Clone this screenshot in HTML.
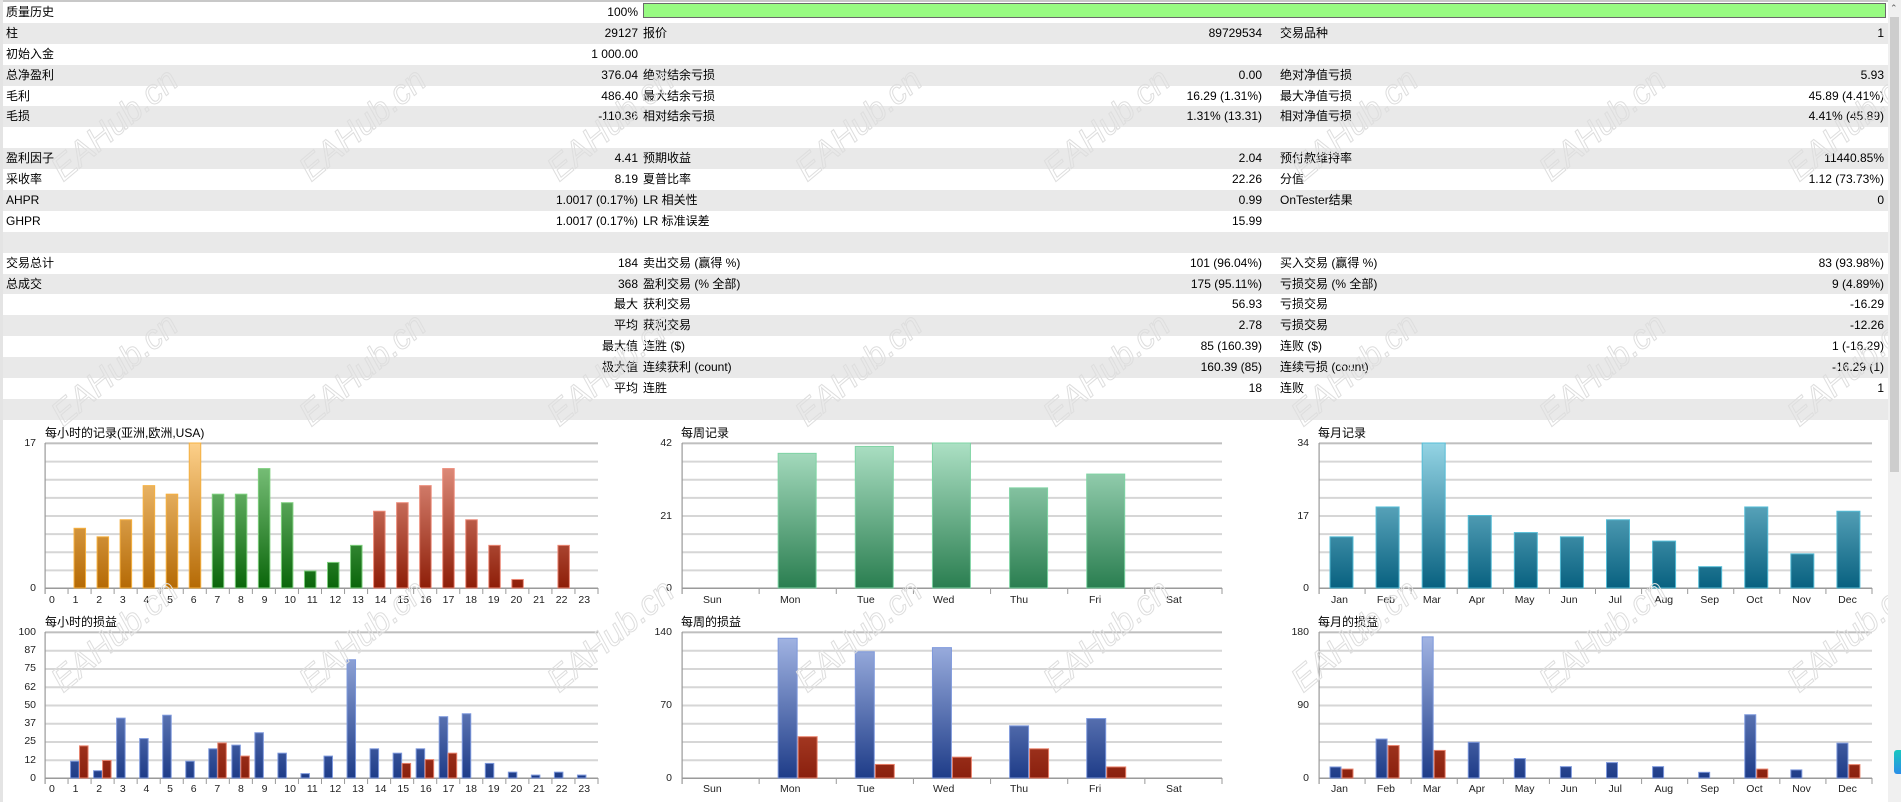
<!DOCTYPE html>
<html><head><meta charset="utf-8">
<style>
*{margin:0;padding:0;box-sizing:border-box}
body{width:1901px;height:802px;overflow:hidden;background:#fff;position:relative;font-family:"Liberation Sans","Noto Sans CJK SC",sans-serif;font-size:12px;color:#000}
.topline{position:absolute;left:0;top:0;width:1888px;height:2px;background:#c8c8c8}
.leftline{position:absolute;left:0;top:0;width:3px;height:802px;background:#e4e4e4}
.rows{position:absolute;left:3px;top:2px;width:1885px}
.r{position:relative;height:20.9px;line-height:20.9px;white-space:nowrap}
.r.g{background:#e9e9e9}
.r span{position:absolute;top:0}
.l1{left:3px}.v1{right:1250px;text-align:right}
.l2{left:640px}.v2{right:626px;text-align:right}
.l3{left:1277px}.v3{right:4px;text-align:right}
.bar{position:absolute;left:643px;top:3px;width:1243px;height:15px;background:#98fb82;border:1px solid #6a6a6a}
.sb{position:absolute;left:1888px;top:0;width:13px;height:802px;background:#f0f0f0}
.thumb{position:absolute;left:1890px;top:17px;width:9px;height:455px;background:#cdcdcd}
.arr{position:absolute;left:1890px;top:3px;font-size:9px;color:#606060}
.widget{position:absolute;left:1894px;top:750px;width:7px;height:24px;border-radius:3px 0 0 3px;background:linear-gradient(#19c7c0,#2a8ee8)}
.t{position:absolute;font-size:12px;white-space:nowrap}
.xl{position:absolute;display:flex;font-size:10.5px;color:#222}
.xl span{flex:1 1 0;white-space:nowrap}
.yl{position:absolute;font-size:10.5px;color:#222;text-align:right;width:30px}
.wm{position:absolute;font:italic 34px "Liberation Sans",sans-serif;color:transparent;-webkit-text-stroke:1px #dedede;transform:translate(-50%,-50%) rotate(-40deg);white-space:nowrap;pointer-events:none}
svg{position:absolute;left:0;top:0}
</style></head><body>
<div class="topline"></div>
<div class="rows">
<div class="r"><span class="l1">质量历史</span><span class="v1">100%</span></div>
<div class="r g"><span class="l1">柱</span><span class="v1">29127</span><span class="l2">报价</span><span class="v2">89729534</span><span class="l3">交易品种</span><span class="v3">1</span></div>
<div class="r"><span class="l1">初始入金</span><span class="v1">1 000.00</span></div>
<div class="r g"><span class="l1">总净盈利</span><span class="v1">376.04</span><span class="l2">绝对结余亏损</span><span class="v2">0.00</span><span class="l3">绝对净值亏损</span><span class="v3">5.93</span></div>
<div class="r"><span class="l1">毛利</span><span class="v1">486.40</span><span class="l2">最大结余亏损</span><span class="v2">16.29 (1.31%)</span><span class="l3">最大净值亏损</span><span class="v3">45.89 (4.41%)</span></div>
<div class="r g"><span class="l1">毛损</span><span class="v1">-110.36</span><span class="l2">相对结余亏损</span><span class="v2">1.31% (13.31)</span><span class="l3">相对净值亏损</span><span class="v3">4.41% (45.89)</span></div>
<div class="r"></div>
<div class="r g"><span class="l1">盈利因子</span><span class="v1">4.41</span><span class="l2">预期收益</span><span class="v2">2.04</span><span class="l3">预付款维持率</span><span class="v3">11440.85%</span></div>
<div class="r"><span class="l1">采收率</span><span class="v1">8.19</span><span class="l2">夏普比率</span><span class="v2">22.26</span><span class="l3">分值</span><span class="v3">1.12 (73.73%)</span></div>
<div class="r g"><span class="l1">AHPR</span><span class="v1">1.0017 (0.17%)</span><span class="l2">LR 相关性</span><span class="v2">0.99</span><span class="l3">OnTester结果</span><span class="v3">0</span></div>
<div class="r"><span class="l1">GHPR</span><span class="v1">1.0017 (0.17%)</span><span class="l2">LR 标准误差</span><span class="v2">15.99</span></div>
<div class="r g"></div>
<div class="r"><span class="l1">交易总计</span><span class="v1">184</span><span class="l2">卖出交易 (赢得 %)</span><span class="v2">101 (96.04%)</span><span class="l3">买入交易 (赢得 %)</span><span class="v3">83 (93.98%)</span></div>
<div class="r g"><span class="l1">总成交</span><span class="v1">368</span><span class="l2">盈利交易 (% 全部)</span><span class="v2">175 (95.11%)</span><span class="l3">亏损交易 (% 全部)</span><span class="v3">9 (4.89%)</span></div>
<div class="r"><span class="v1">最大</span><span class="l2">获利交易</span><span class="v2">56.93</span><span class="l3">亏损交易</span><span class="v3">-16.29</span></div>
<div class="r g"><span class="v1">平均</span><span class="l2">获利交易</span><span class="v2">2.78</span><span class="l3">亏损交易</span><span class="v3">-12.26</span></div>
<div class="r"><span class="v1">最大值</span><span class="l2">连胜 ($)</span><span class="v2">85 (160.39)</span><span class="l3">连败 ($)</span><span class="v3">1 (-16.29)</span></div>
<div class="r g"><span class="v1">极大值</span><span class="l2">连续获利 (count)</span><span class="v2">160.39 (85)</span><span class="l3">连续亏损 (count)</span><span class="v3">-16.29 (1)</span></div>
<div class="r"><span class="v1">平均</span><span class="l2">连胜</span><span class="v2">18</span><span class="l3">连败</span><span class="v3">1</span></div>
<div class="r g"></div>
</div>
<div class="leftline"></div>
<div class="bar"></div>

<svg id="c" width="1901" height="802" xmlns="http://www.w3.org/2000/svg">
<defs>
<linearGradient id="go" gradientUnits="userSpaceOnUse" x1="0" y1="443" x2="0" y2="588"><stop offset="0" stop-color="#fdd08a"/><stop offset="1" stop-color="#b56a05"/></linearGradient>
<linearGradient id="gg" gradientUnits="userSpaceOnUse" x1="0" y1="443" x2="0" y2="588"><stop offset="0" stop-color="#8ccf8c"/><stop offset="1" stop-color="#0a660a"/></linearGradient>
<linearGradient id="gr" gradientUnits="userSpaceOnUse" x1="0" y1="443" x2="0" y2="588"><stop offset="0" stop-color="#eca090"/><stop offset="1" stop-color="#8e1e08"/></linearGradient>
<linearGradient id="gw" gradientUnits="userSpaceOnUse" x1="0" y1="443" x2="0" y2="588"><stop offset="0" stop-color="#ace0c4"/><stop offset="1" stop-color="#2a7e50"/></linearGradient>
<linearGradient id="gt" gradientUnits="userSpaceOnUse" x1="0" y1="443" x2="0" y2="588"><stop offset="0" stop-color="#94d4e4"/><stop offset="1" stop-color="#086180"/></linearGradient>
<linearGradient id="gb" gradientUnits="userSpaceOnUse" x1="0" y1="632" x2="0" y2="778"><stop offset="0" stop-color="#a6b8e6"/><stop offset="1" stop-color="#1e3c88"/></linearGradient>
<linearGradient id="gd" gradientUnits="userSpaceOnUse" x1="0" y1="632" x2="0" y2="778"><stop offset="0" stop-color="#e07050"/><stop offset="1" stop-color="#8a200e"/></linearGradient>
</defs>
</svg>

<div class="t" style="left:45px;top:424px">每小时的记录(亚洲,欧洲,USA)</div>
<div class="t" style="left:45px;top:613px">每小时的损益</div>
<div class="t" style="left:681px;top:424px">每周记录</div>
<div class="t" style="left:681px;top:613px">每周的损益</div>
<div class="t" style="left:1318px;top:424px">每月记录</div>
<div class="t" style="left:1318px;top:613px">每月的损益</div>

<div class="yl" style="left:6px;top:437px">17</div>
<div class="yl" style="left:6px;top:582px">0</div>
<div class="yl" style="left:6px;top:626px">100</div>
<div class="yl" style="left:6px;top:644px">87</div>
<div class="yl" style="left:6px;top:662px">75</div>
<div class="yl" style="left:6px;top:681px">62</div>
<div class="yl" style="left:6px;top:699px">50</div>
<div class="yl" style="left:6px;top:717px">37</div>
<div class="yl" style="left:6px;top:735px">25</div>
<div class="yl" style="left:6px;top:754px">12</div>
<div class="yl" style="left:6px;top:772px">0</div>
<div class="yl" style="left:642px;top:437px">42</div>
<div class="yl" style="left:642px;top:510px">21</div>
<div class="yl" style="left:642px;top:582px">0</div>
<div class="yl" style="left:642px;top:626px">140</div>
<div class="yl" style="left:642px;top:699px">70</div>
<div class="yl" style="left:642px;top:772px">0</div>
<div class="yl" style="left:1279px;top:437px">34</div>
<div class="yl" style="left:1279px;top:510px">17</div>
<div class="yl" style="left:1279px;top:582px">0</div>
<div class="yl" style="left:1279px;top:626px">180</div>
<div class="yl" style="left:1279px;top:699px">90</div>
<div class="yl" style="left:1279px;top:772px">0</div>

<div class="xl" style="left:45px;top:594px;width:553px"><span style="padding-left:4px">0</span><span style="padding-left:4px">1</span><span style="padding-left:4px">2</span><span style="padding-left:4px">3</span><span style="padding-left:4px">4</span><span style="padding-left:4px">5</span><span style="padding-left:4px">6</span><span style="padding-left:4px">7</span><span style="padding-left:4px">8</span><span style="padding-left:4px">9</span><span style="padding-left:3px">10</span><span style="padding-left:3px">11</span><span style="padding-left:3px">12</span><span style="padding-left:3px">13</span><span style="padding-left:3px">14</span><span style="padding-left:3px">15</span><span style="padding-left:3px">16</span><span style="padding-left:3px">17</span><span style="padding-left:3px">18</span><span style="padding-left:3px">19</span><span style="padding-left:3px">20</span><span style="padding-left:3px">21</span><span style="padding-left:3px">22</span><span style="padding-left:3px">23</span></div>
<div class="xl" style="left:45px;top:783px;width:553px"><span style="padding-left:4px">0</span><span style="padding-left:4px">1</span><span style="padding-left:4px">2</span><span style="padding-left:4px">3</span><span style="padding-left:4px">4</span><span style="padding-left:4px">5</span><span style="padding-left:4px">6</span><span style="padding-left:4px">7</span><span style="padding-left:4px">8</span><span style="padding-left:4px">9</span><span style="padding-left:3px">10</span><span style="padding-left:3px">11</span><span style="padding-left:3px">12</span><span style="padding-left:3px">13</span><span style="padding-left:3px">14</span><span style="padding-left:3px">15</span><span style="padding-left:3px">16</span><span style="padding-left:3px">17</span><span style="padding-left:3px">18</span><span style="padding-left:3px">19</span><span style="padding-left:3px">20</span><span style="padding-left:3px">21</span><span style="padding-left:3px">22</span><span style="padding-left:3px">23</span></div>
<div class="xl" style="left:682px;top:594px;width:540px"><span style="padding-left:21px">Sun</span><span style="padding-left:21px">Mon</span><span style="padding-left:21px">Tue</span><span style="padding-left:20px">Wed</span><span style="padding-left:21px">Thu</span><span style="padding-left:23px">Fri</span><span style="padding-left:21px">Sat</span></div>
<div class="xl" style="left:682px;top:783px;width:540px"><span style="padding-left:21px">Sun</span><span style="padding-left:21px">Mon</span><span style="padding-left:21px">Tue</span><span style="padding-left:20px">Wed</span><span style="padding-left:21px">Thu</span><span style="padding-left:23px">Fri</span><span style="padding-left:21px">Sat</span></div>
<div class="xl" style="left:1319px;top:594px;width:553px"><span style="padding-left:12px">Jan</span><span style="padding-left:12px">Feb</span><span style="padding-left:12px">Mar</span><span style="padding-left:12px">Apr</span><span style="padding-left:12px">May</span><span style="padding-left:12px">Jun</span><span style="padding-left:14px">Jul</span><span style="padding-left:12px">Aug</span><span style="padding-left:12px">Sep</span><span style="padding-left:12px">Oct</span><span style="padding-left:12px">Nov</span><span style="padding-left:12px">Dec</span></div>
<div class="xl" style="left:1319px;top:783px;width:553px"><span style="padding-left:12px">Jan</span><span style="padding-left:12px">Feb</span><span style="padding-left:12px">Mar</span><span style="padding-left:12px">Apr</span><span style="padding-left:12px">May</span><span style="padding-left:12px">Jun</span><span style="padding-left:14px">Jul</span><span style="padding-left:12px">Aug</span><span style="padding-left:12px">Sep</span><span style="padding-left:12px">Oct</span><span style="padding-left:12px">Nov</span><span style="padding-left:12px">Dec</span></div>

<div class="wm" style="left:115px;top:125px">EAHub.cn</div><div class="wm" style="left:363px;top:125px">EAHub.cn</div><div class="wm" style="left:611px;top:125px">EAHub.cn</div><div class="wm" style="left:859px;top:125px">EAHub.cn</div><div class="wm" style="left:1107px;top:125px">EAHub.cn</div><div class="wm" style="left:1355px;top:125px">EAHub.cn</div><div class="wm" style="left:1603px;top:125px">EAHub.cn</div><div class="wm" style="left:1851px;top:125px">EAHub.cn</div>
<div class="wm" style="left:115px;top:370px">EAHub.cn</div><div class="wm" style="left:363px;top:370px">EAHub.cn</div><div class="wm" style="left:611px;top:370px">EAHub.cn</div><div class="wm" style="left:859px;top:370px">EAHub.cn</div><div class="wm" style="left:1107px;top:370px">EAHub.cn</div><div class="wm" style="left:1355px;top:370px">EAHub.cn</div><div class="wm" style="left:1603px;top:370px">EAHub.cn</div><div class="wm" style="left:1851px;top:370px">EAHub.cn</div>
<div class="wm" style="left:115px;top:636px">EAHub.cn</div><div class="wm" style="left:363px;top:636px">EAHub.cn</div><div class="wm" style="left:611px;top:636px">EAHub.cn</div><div class="wm" style="left:859px;top:636px">EAHub.cn</div><div class="wm" style="left:1107px;top:636px">EAHub.cn</div><div class="wm" style="left:1355px;top:636px">EAHub.cn</div><div class="wm" style="left:1603px;top:636px">EAHub.cn</div><div class="wm" style="left:1851px;top:636px">EAHub.cn</div>

<div class="sb"></div><div class="thumb"></div><div class="arr">&#8963;</div>
<div class="widget"></div>

<script>
(function(){
var S=document.getElementById('c'),NS='http://www.w3.org/2000/svg';
function el(n,a){var e=document.createElementNS(NS,n);for(var k in a)e.setAttribute(k,a[k]);S.appendChild(e);return e;}
function grid(x0,x1,top,base,n){
  for(var i=0;i<8;i++){var y=top+(base-top)*i/8;
    el('rect',{x:x0,y:y-0.5,width:x1-x0,height:2,fill:'#d6d6d6'});}
  el('rect',{x:x0,y:top-0.5,width:x1-x0,height:1,fill:'#a8a8a8'});
  el('rect',{x:x0,y:base-0.5,width:x1-x0,height:1.5,fill:'#9a9a9a'});
  el('rect',{x:x0-0.5,y:top,width:1.2,height:base-top+6,fill:'#9a9a9a'});
  var s=(x1-x0)/n;
  for(var j=1;j<=n;j++){el('rect',{x:x0+s*j-0.5,y:base,width:1,height:6,fill:'#9a9a9a'});}
}
function bars(x0,x1,top,base,max,vals,off,w,fill,stroke){
  var n=vals.length,s=(x1-x0)/n;
  for(var i=0;i<n;i++){var v=vals[i];if(!v)continue;
    var h=(base-top)*v/max,f=typeof fill=='function'?fill(i):fill,st=typeof stroke=='function'?stroke(i):stroke;
    el('rect',{x:x0+s*i+off,y:base-h,width:w,height:h,fill:f,stroke:st,'stroke-width':1});}
}
grid(45,598,443,588,24);
bars(45,598,443,588,17,[0,7,6,8,12,11,17,11,11,14,10,2,3,5,9,10,12,14,8,5,1,0,5,0],6,11.5,
 function(i){return i<7?'url(#go)':i<14?'url(#gg)':'url(#gr)';},
 function(i){return i<7?'#f5b040':i<14?'#7fcf7f':'#ec8a78';});
grid(45,598,632,778,24);
bars(45,598,632,778,100,[0,11.5,5,41,27,43,11.5,20,22.5,31,17,3,15,81,20,17,20,42,44,10,4,2,4,2],2.5,8.5,'url(#gb)','#7d98dc');
bars(45,598,632,778,100,[0,22,12,0,0,0,0,24,15,0,0,0,0,0,0,10,12.6,17,0,0,0,0,0,0],11.5,8.5,'url(#gd)','#e8806a');
grid(682,1222,443,588,7);
bars(682,1222,443,588,42,[0,39,41,42,29,33,0],19,38,'url(#gw)','#7fd4a4');
grid(682,1222,632,778,7);
bars(682,1222,632,778,140,[0,134,121,125,50,57,0],19,19,'url(#gb)','#7d98dc');
bars(682,1222,632,778,140,[0,39.6,13,20,28,10.6,0],39,19,'url(#gd)','#e8806a');
grid(1319,1872,443,588,12);
bars(1319,1872,443,588,34,[12,19,34,17,13,12,16,11,5,19,8,18],11,23,'url(#gt)','#55bcd6');
grid(1319,1872,632,778,12);
bars(1319,1872,632,778,180,[13.6,48,174,44,24,14,19,14,7,78,10,43],11,11,'url(#gb)','#7d98dc');
bars(1319,1872,632,778,180,[11,40,34,0,0,0,0,0,0,11,0,16.5],23,11,'url(#gd)','#e8806a');
})();
</script>
</body></html>
